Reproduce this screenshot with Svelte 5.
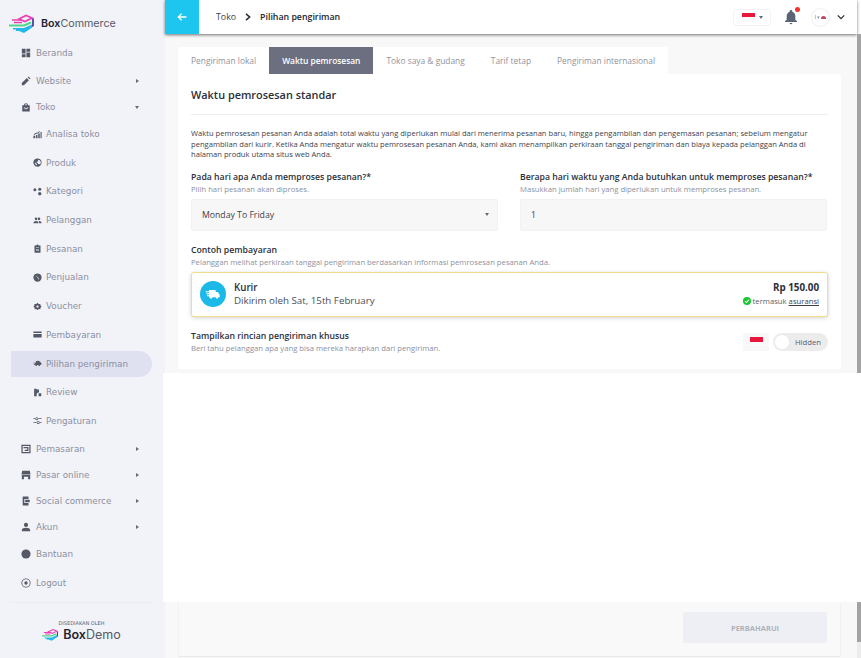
<script lang="ts">
  const topNav = [
    { label: "Beranda", icon: "grid" },
    { label: "Website", icon: "pen", arrow: "right" },
    { label: "Toko", icon: "bag", arrow: "down" }
  ];
  const subNav = [
    { label: "Analisa toko", icon: "chart" },
    { label: "Produk", icon: "globe" },
    { label: "Kategori", icon: "dots" },
    { label: "Pelanggan", icon: "people" },
    { label: "Pesanan", icon: "clip" },
    { label: "Penjualan", icon: "sale" },
    { label: "Voucher", icon: "ticket" },
    { label: "Pembayaran", icon: "card" },
    { label: "Pilihan pengiriman", icon: "ship", active: true },
    { label: "Review", icon: "review" },
    { label: "Pengaturan", icon: "sliders" }
  ];
  const bottomNav = [
    { label: "Pemasaran", icon: "news", arrow: "right" },
    { label: "Pasar online", icon: "store", arrow: "right" },
    { label: "Social commerce", icon: "phone", arrow: "right" },
    { label: "Akun", icon: "user", arrow: "right" },
    { label: "Bantuan", icon: "help", tall: true },
    { label: "Logout", icon: "logout", tall: true }
  ];
  const tabs = ["Pengiriman lokal", "Waktu pemrosesan", "Toko saya & gudang", "Tarif tetap", "Pengiriman internasional"];
</script>

{#snippet icon(name: string)}
  <svg class="nav-icon" viewBox="0 0 24 24" aria-hidden="true">
    {#if name === "grid"}
      <path d="M2 2h9v11H2zM13 2h9v7h-9zM13 11h9v11h-9zM2 15h9v7H2z" />
    {:else if name === "pen"}
      <path d="M2 22v-5L14 5l5 5L7 22zM16 3l2-2 5 5-2 2z" />
    {:else if name === "bag"}
      <path d="M3 8h4a5 5 0 0 1 10 0h4v15H3zM9.500 8h5a2.500 2.500 0 0 0-5 0zM7 12l5 3.500 5-3.500v2.500L12 18l-5-3.500z" fill-rule="evenodd" />
    {:else if name === "chart"}
      <path d="M1 22v-7h5v7zM8 22v-9h4v9zM14 22V9h4v13zM20 22V5h3v17zM2 11l6-3.500 5-1 4-4 1.500 1.500-5 5-5 1-5 3z" />
    {:else if name === "globe"}
      <path d="M12 1a11 11 0 1 0 0 22 11 11 0 0 0 0-22zm-1 19c-3-1-6-4-6-8l5 3v2zm8-3-2-1h-4v-3l-3-1V9h3l1-4h3a9 9 0 0 1 2 12z" fill-rule="evenodd" />
    {:else if name === "dots"}
      <circle cx="5" cy="7" r="4" /><circle cx="18" cy="6" r="4" /><circle cx="18" cy="18" r="4.500" />
    {:else if name === "people"}
      <path d="M8 11a3.500 3.500 0 1 0 0-7 3.500 3.500 0 0 0 0 7zM16 11a3.500 3.500 0 1 0 0-7 3.500 3.500 0 0 0 0 7zM1 19c0-4 4-6 7-6s7 2 7 6zM16.500 19c0-2-.5-4-2-5.400 4-1 8.500 1 8.500 5.400z" />
    {:else if name === "clip"}
      <path d="M4 4h5a3 3 0 0 1 6 0h5v19H4zM8 9h8v1.500H8zM8 13h8v1.500H8zM8 17h8v1.500H8z" fill-rule="evenodd" />
    {:else if name === "sale"}
      <path d="M12 1a11 11 0 1 0 0 22 11 11 0 0 0 0-22zM8 8.500l1-1 7 7-1 1zM9 7a1.500 1.500 0 1 1 0 3 1.500 1.500 0 0 1 0-3zM15 14a1.500 1.500 0 1 1 0 3 1.500 1.500 0 0 1 0-3z" fill-rule="evenodd" />
    {:else if name === "ticket"}
      <path d="M12 2l3 3.500 4.500-.5.500 4.500 3 2.500-3 3 -.5 4-4.500-.5L12 22l-3-3.500-4.500.5-.5-4.500L1 12l3-3-.5-4 5 .5zM12 9a3 3 0 1 0 0 6 3 3 0 0 0 0-6z" fill-rule="evenodd" />
    {:else if name === "card"}
      <path d="M1 4h22v4H1zM1 10.500h22V20H1z" />
    {:else if name === "ship"}
      <path d="M8 6c3-2 8-2 11 1l4 5-2 4h-2a2.500 2.500 0 0 1-5 0h-3a2.500 2.500 0 0 1-5 0c-2 0-3-1-3-3l3-2zM1 10h4v1.500H1zM2 13h3v1.500H2z" />
    {:else if name === "review"}
      <path d="M3 2h6l1 2h6v8a6 6 0 0 0-5 10H3zM15 14h7v8h-7z" />
    {:else if name === "sliders"}
      <path d="M1 6h6v2H1zM13 6h10v2H13zM1 16h10v2H1zM17 16h6v2h-6zM10 3a4 4 0 1 0 0 8 4 4 0 0 0 0-8zm0 2a2 2 0 1 1 0 4 2 2 0 0 1 0-4zM14 13a4 4 0 1 0 0 8 4 4 0 0 0 0-8zm0 2a2 2 0 1 1 0 4 2 2 0 0 1 0-4z" fill-rule="evenodd" />
    {:else if name === "news"}
      <path d="M1 2h22v20H1zM4 5v14h16V5zM6 7h12v10H9v-3h6v-4H6z" fill-rule="evenodd" />
    {:else if name === "store"}
      <path d="M3 2h18l2 9H1zM2 12h20v10h-5v-6H7v6H2z" />
    {:else if name === "phone"}
      <path d="M4 1h14v6H8v10h10v6H4zM10 9h11v6H10z" />
    {:else if name === "user"}
      <path d="M12 2a5 5 0 1 1 0 10 5 5 0 0 1 0-10zM2 22v-3c0-3 5-5 10-5s10 2 10 5v3z" />
    {:else if name === "help"}
      <circle cx="12" cy="12" r="11" />
    {:else if name === "logout"}
      <path d="M12 1a11 11 0 1 0 0 22 11 11 0 0 0 0-22zm0 2a9 9 0 1 1 0 18 9 9 0 0 1 0-18zm0 5a4 4 0 1 0 0 8 4 4 0 0 0 0-8z" fill-rule="evenodd" />
    {/if}
  </svg>
{/snippet}

{#snippet logo()}
  <svg class="logo-mark" viewBox="0 0 28 20" aria-hidden="true">
    <path d="M10 5 17 1.500l6 2.500-7 3.500z" fill="none" stroke="#ec3fb4" stroke-width="1.800" />
    <path d="M24 4.500v7l-7 4" fill="none" stroke="#4b3fa8" stroke-width="1.800" />
    <path d="M3 6h10M5 8.500h8" stroke="#ec3fb4" stroke-width="1.600" />
    <path d="M0 11.500h15l7-3" fill="none" stroke="#52d58c" stroke-width="2" />
    <path d="M4 14h11l8-3.500v3L15 19l-5-2H7v-1.500H4z" fill="#22b8ea" />
  </svg>
{/snippet}

{#snippet navRow(item: any, sub: boolean)}
  <div class="nav-row" class:sub class:active={item.active} class:tall={item.tall}>
    {@render icon(item.icon)}
    <span class="nav-label">{item.label}</span>
    {#if item.arrow}
      <span class="caret {item.arrow}"></span>
    {/if}
  </div>
{/snippet}

{#snippet flag()}
  <span class="flag"><i></i></span>
{/snippet}

<div class="page">
  <aside class="sidebar">
    <div class="brand">
      {@render logo()}
      <span class="brand-name"><b>Box</b>Commerce</span>
    </div>
    <nav class="nav-top">
      {#each topNav as item}
        {@render navRow(item, false)}
      {/each}
    </nav>
    <nav class="nav-sub">
      {#each subNav as item}
        {@render navRow(item, true)}
      {/each}
    </nav>
    <nav class="nav-bottom">
      {#each bottomNav as item}
        {@render navRow(item, false)}
      {/each}
    </nav>
    <footer class="provided">
      <small>DISEDIAKAN OLEH</small>
      <div class="provided-logo">
        {@render logo()}
        <span class="demo-name"><b>Box</b>Demo</span>
      </div>
    </footer>
  </aside>

  <main class="main">
    <header class="topbar">
      <div class="back">
        <svg viewBox="0 0 16 16" width="12" height="12" aria-hidden="true">
          <path d="M14 8H3M7.500 3.500 3 8l4.500 4.500" fill="none" stroke="#fff" stroke-width="1.800" />
        </svg>
      </div>
      <div class="crumbs">
        <span>Toko</span>
        <svg viewBox="0 0 10 10" width="8" height="8" aria-hidden="true">
          <path d="M2.500 1 7 5 2.500 9" fill="none" stroke="#2b2f3a" stroke-width="2" />
        </svg>
        <b>Pilihan pengiriman</b>
      </div>
      <div class="top-actions">
        <div class="lang">
          {@render flag()}
          <span class="mini-caret"></span>
        </div>
        <div class="bell">
          <svg viewBox="0 0 24 24" width="16" height="16" aria-hidden="true">
            <path d="M12 1.500a2 2 0 0 1 2 2v.500c3 1 4.500 3.500 4.500 7v5l2.500 2.500v1H3v-1L5.500 16v-5c0-3.500 1.500-6 4.500-7v-.5a2 2 0 0 1 2-2zM10 21h4a2 2 0 0 1-4 0z" fill="#5b6475" />
          </svg>
          <span class="dot"></span>
        </div>
        <div class="avatar"><span>I</span><em>▾</em><i></i></div>
        <svg viewBox="0 0 10 10" width="8" height="8" aria-hidden="true">
          <path d="M1 3l4 4 4-4" fill="none" stroke="#2b2f3a" stroke-width="1.600" />
        </svg>
      </div>
    </header>

    <div class="content">
      <div class="tabs">
        {#each tabs as tab, i}
          <div class="tab" class:selected={i === 1}>{tab}</div>
        {/each}
      </div>

      <section class="panel">
        <h1>Waktu pemrosesan standar</h1>
        <p class="intro">Waktu pemrosesan pesanan Anda adalah total waktu yang diperlukan mulai dari menerima pesanan baru, hingga pengambilan dan pengemasan pesanan; sebelum mengatur pengambilan dari kurir. Ketika Anda mengatur waktu pemrosesan pesanan Anda, kami akan menampilkan perkiraan tanggal pengiriman dan biaya kepada pelanggan Anda di halaman produk utama situs web Anda.</p>

        <div class="fields">
          <div class="field">
            <label for="days">Pada hari apa Anda memproses pesanan?*</label>
            <span class="hint">Pilih hari pesanan akan diproses.</span>
            <div class="select" id="days">Monday To Friday<span class="caret down"></span></div>
          </div>
          <div class="field">
            <label for="count">Berapa hari waktu yang Anda butuhkan untuk memproses pesanan?*</label>
            <span class="hint">Masukkan jumlah hari yang diperlukan untuk memproses pesanan.</span>
            <div class="select" id="count">1</div>
          </div>
        </div>

        <h2>Contoh pembayaran</h2>
        <span class="hint">Pelanggan melihat perkiraan tanggal pengiriman berdasarkan informasi pemrosesan pesanan Anda.</span>

        <div class="ship-card">
          <div class="truck">
            <svg viewBox="0 0 24 24" width="16" height="16" aria-hidden="true">
              <path d="M7 6h9v3h3l3 4v4h-2a2 2 0 0 1-4 0H11a2 2 0 0 1-4 0H6V6zM1 8h5v1.300H1zM2 11h4v1.300H2zM3 14h3v1.300H3z" fill="#fff" />
            </svg>
          </div>
          <div class="ship-text">
            <b>Kurir</b>
            <span>Dikirim oleh Sat, 15th February</span>
          </div>
          <div class="ship-price">
            <b>Rp 150.00</b>
            <span class="insured">
              <svg viewBox="0 0 12 12" width="8" height="8" aria-hidden="true">
                <circle cx="6" cy="6" r="6" fill="#16c72e" />
                <path d="M3 6.200 5.200 8.300 9 4" fill="none" stroke="#fff" stroke-width="1.600" />
              </svg>
              termasuk <u>asuransi</u>
            </span>
          </div>
        </div>

        <div class="custom-row">
          <div class="custom-text">
            <h2>Tampilkan rincian pengiriman khusus</h2>
            <span class="hint">Beri tahu pelanggan apa yang bisa mereka harapkan dari pengiriman.</span>
          </div>
          <div class="flag-box">{@render flag()}</div>
          <div class="toggle"><span class="knob"></span>Hidden</div>
        </div>
      </section>

      <div class="actions">
        <div class="update">PERBAHARUI</div>
      </div>
    </div>
  </main>

  <div class="blank"></div>
  <div class="scrollbar"></div>
</div>

<style>
  :global(body) {
    margin: 0;
    background: #fff;
  }

  .page {
    position: relative;
    display: flex;
    width: 861px;
    height: 658px;
    overflow: hidden;
    font-family: "Open Sans", sans-serif;
    color: #2b2f3a;
  }

  .sidebar {
    display: flex;
    flex-direction: column;
    flex: 0 0 165px;
    min-width: 0;
    background: #f2f3f9;
  }

  .brand {
    display: flex;
    align-items: center;
    gap: 4px;
    height: 40px;
    padding: 7px 0 0 9px;
    box-sizing: border-box;
  }

  .logo-mark {
    width: 28px;
    height: 20px;
    flex: none;
  }

  .brand-name {
    font-family: "Inter", sans-serif;
    font-size: 10.700px;
    color: #555965;
  }

  .brand-name b,
  .demo-name b {
    color: #1f2330;
    font-weight: 600;
  }

  .nav-top,
  .nav-bottom {
    display: flex;
    flex-direction: column;
  }

  .nav-row {
    display: flex;
    align-items: center;
    flex: none;
    height: 26px;
    padding: 0 26px 0 21px;
    gap: 5px;
    font-family: "DejaVu Sans", sans-serif;
    font-size: 8.800px;
    color: #8b8fa0;
  }

  .nav-top .nav-row:first-child {
    margin-bottom: 2px;
  }

  .nav-row.tall {
    height: 29px;
  }

  .nav-sub {
    display: flex;
    flex-direction: column;
    gap: 2.700px;
    margin: 1px 0 2px;
  }

  .nav-sub .nav-row {
    margin: 0 13px 0 11px;
    padding: 0 0 0 22px;
    gap: 4px;
  }

  .nav-row.active {
    background: #dfe1f0;
    border-radius: 0 13px 13px 0;
  }

  .nav-icon {
    width: 9px;
    height: 9px;
    flex: none;
    fill: #555966;
  }

  .nav-top .nav-icon,
  .nav-bottom .nav-icon {
    width: 10px;
    height: 10px;
  }

  .nav-label {
    white-space: nowrap;
  }

  .caret {
    display: block;
    width: 0;
    height: 0;
    margin-left: auto;
  }

  .caret.right {
    border-left: 3px solid #666a78;
    border-top: 2.500px solid transparent;
    border-bottom: 2.500px solid transparent;
  }

  .caret.down {
    border-top: 3px solid #666a78;
    border-left: 2.500px solid transparent;
    border-right: 2.500px solid transparent;
  }

  .provided {
    display: flex;
    flex-direction: column;
    align-items: center;
    margin: auto 12px 0 10px;
    height: 56px;
    padding-top: 17px;
    box-sizing: border-box;
    border-top: 1px solid #ebecf3;
  }

  .provided small {
    font-family: "DejaVu Sans", sans-serif;
    font-size: 5px;
    line-height: 7px;
    color: #5a5e6b;
  }

  .provided-logo {
    display: flex;
    align-items: center;
    gap: 3px;
  }

  .provided-logo .logo-mark {
    width: 18px;
    height: 14px;
  }

  .demo-name {
    font-family: "Inter", sans-serif;
    font-size: 12.500px;
    color: #555965;
  }

  .main {
    display: flex;
    flex-direction: column;
    flex: 1;
    min-width: 0;
    background: #f8f8f8;
    margin-right: 4px;
  }

  .topbar {
    display: flex;
    align-items: center;
    flex: none;
    height: 34px;
    background: #fff;
    box-shadow: 0 1px 3px rgba(0, 0, 0, 0.55);
    position: relative;
    z-index: 1;
  }

  .back {
    display: flex;
    align-items: center;
    justify-content: center;
    width: 34px;
    height: 100%;
    background: #1cc6ee;
  }

  .crumbs {
    display: flex;
    align-items: center;
    gap: 8px;
    margin-left: 17px;
    font-size: 8.800px;
    color: #3d414c;
  }

  .crumbs b {
    font-weight: 600;
    color: #23262f;
  }

  .top-actions {
    display: flex;
    align-items: center;
    margin-left: auto;
    padding-right: 12px;
  }

  .lang {
    display: flex;
    align-items: center;
    justify-content: center;
    gap: 4px;
    width: 38px;
    height: 17px;
    border: 1px solid #f3f3f5;
    border-radius: 3px;
    box-sizing: border-box;
  }

  .mini-caret {
    border-top: 3px solid #6a6e7a;
    border-left: 2.500px solid transparent;
    border-right: 2.500px solid transparent;
  }

  .flag {
    display: block;
    width: 13px;
    height: 9px;
    background: #fafafa;
  }

  .flag i {
    display: block;
    height: 4.500px;
    background: #e8173c;
  }

  .bell {
    position: relative;
    display: flex;
    margin-left: 12px;
  }

  .dot {
    position: absolute;
    top: -2px;
    right: -1px;
    width: 5px;
    height: 5px;
    background: #f5332b;
    border-radius: 50%;
  }

  .avatar {
    position: relative;
    display: flex;
    align-items: center;
    justify-content: center;
    gap: 1px;
    width: 19px;
    height: 19px;
    margin: 0 7px 0 12px;
    border: 1px solid #f0f0f2;
    border-radius: 50%;
    box-sizing: border-box;
    font-size: 5px;
    color: #d8284a;
  }

  .avatar em {
    font-style: normal;
    color: #8a8f9c;
  }

  .avatar i {
    width: 5px;
    height: 3px;
    background: #c2475f;
    border-radius: 3px 3px 0 0;
  }

  .content {
    display: flex;
    flex-direction: column;
    padding: 13px 16px 0 13px;
    flex: 1;
    min-height: 0;
  }

  .tabs {
    display: flex;
    flex: none;
    height: 27px;
  }

  .tab {
    display: flex;
    align-items: center;
    padding: 0 13px;
    background: #fff;
    font-size: 8.400px;
    color: #90939e;
    white-space: nowrap;
  }

  .tab.selected {
    background: #6b6f80;
    color: #fff;
    font-weight: 600;
  }

  .panel {
    flex: none;
    background: #fff;
    padding: 13px 13px 0;
    height: 295px;
    box-sizing: border-box;
  }

  h1 {
    margin: 0 0 13px;
    padding-bottom: 11px;
    font-size: 10.900px;
    line-height: 16px;
    font-weight: 600;
    color: #2b2f3a;
    border-bottom: 1px solid #eeeeee;
  }

  h2,
  label {
    display: block;
    margin: 0;
    font-size: 8.700px;
    line-height: 13px;
    font-weight: 600;
    color: #2b2f3a;
  }

  .intro {
    margin: 0 0 11px;
    font-size: 7.600px;
    line-height: 10.500px;
    color: #3d414c;
  }

  .hint {
    display: block;
    font-size: 7.700px;
    line-height: 11px;
    color: #8d90a0;
  }

  .fields {
    display: grid;
    grid-template-columns: 307px 307px;
    gap: 22px;
    margin-bottom: 13px;
  }

  .select {
    display: flex;
    align-items: center;
    justify-content: space-between;
    height: 32px;
    margin-top: 4px;
    padding: 0 8px 0 10px;
    background: #f7f7f7;
    border: 1px solid #f2f2f2;
    border-radius: 2px;
    box-sizing: border-box;
    font-size: 8.700px;
    color: #3d414c;
  }

  .ship-card {
    display: flex;
    align-items: center;
    height: 45px;
    margin-top: 4px;
    padding: 0 8px;
    background: #fff;
    border: 1px solid #f4dc8e;
    border-radius: 3px;
    box-sizing: border-box;
    box-shadow: 0 1px 4px rgba(0, 0, 0, 0.18);
  }

  .truck {
    display: flex;
    align-items: center;
    justify-content: center;
    width: 26px;
    height: 26px;
    background: #1cb8e8;
    border-radius: 50%;
  }

  .ship-text {
    display: flex;
    flex-direction: column;
    margin-left: 8px;
    font-size: 9.750px;
    line-height: 13px;
    color: #4a4e5a;
  }

  .ship-text b {
    font-weight: 600;
    color: #2b2f3a;
  }

  .ship-price {
    display: flex;
    flex-direction: column;
    align-items: flex-end;
    margin-left: auto;
  }

  .ship-price b {
    font-size: 9.800px;
    line-height: 14px;
    font-weight: 700;
    color: #2b2f3a;
  }

  .insured {
    display: flex;
    align-items: center;
    gap: 2px;
    font-size: 7.700px;
    line-height: 12px;
    color: #5b5f6c;
  }

  .insured u {
    color: #3d414c;
  }

  .custom-row {
    display: flex;
    align-items: flex-start;
    margin-top: 13px;
  }

  .custom-text {
    flex: 1;
  }

  .flag-box {
    display: flex;
    align-items: center;
    justify-content: center;
    width: 26px;
    height: 18px;
    margin-top: 3px;
    background: #f8f8f8;
    border-radius: 2px;
  }

  .toggle {
    position: relative;
    display: flex;
    align-items: center;
    justify-content: flex-end;
    width: 55px;
    height: 18px;
    margin: 3px 0 0 4px;
    padding-right: 7px;
    background: #ececec;
    border-radius: 9px;
    box-sizing: border-box;
    font-size: 7.700px;
    color: #5b5f6c;
  }

  .knob {
    position: absolute;
    left: 2px;
    top: 2px;
    width: 14px;
    height: 14px;
    background: #fff;
    border-radius: 50%;
  }

  .actions {
    display: flex;
    align-items: flex-end;
    justify-content: flex-end;
    height: 56px;
    margin-top: auto;
    margin-bottom: 1px;
    padding: 0 13px 13px;
    box-sizing: border-box;
    background: #f9f9f9;
    border-left: 1px solid #f1f1f1;
    border-right: 1px solid #f1f1f1;
    border-bottom: 1px solid #e8e8ec;
  }

  .update {
    display: flex;
    align-items: center;
    justify-content: center;
    width: 144px;
    height: 31px;
    background: #eeeff4;
    border-radius: 2px;
    font-size: 7.500px;
    font-weight: 700;
    color: #b0b2bc;
  }

  /* the white patch that covers the middle of the capture */
  .blank {
    position: absolute;
    left: 163px;
    top: 373px;
    width: 698px;
    height: 229px;
    background: #fff;
    z-index: 2;
  }

  .scrollbar {
    position: absolute;
    top: 34px;
    right: 0;
    width: 4px;
    height: 624px;
    background: linear-gradient(#a3a3a3 608px, #ececec 608px);
    z-index: 1;
  }
</style>
